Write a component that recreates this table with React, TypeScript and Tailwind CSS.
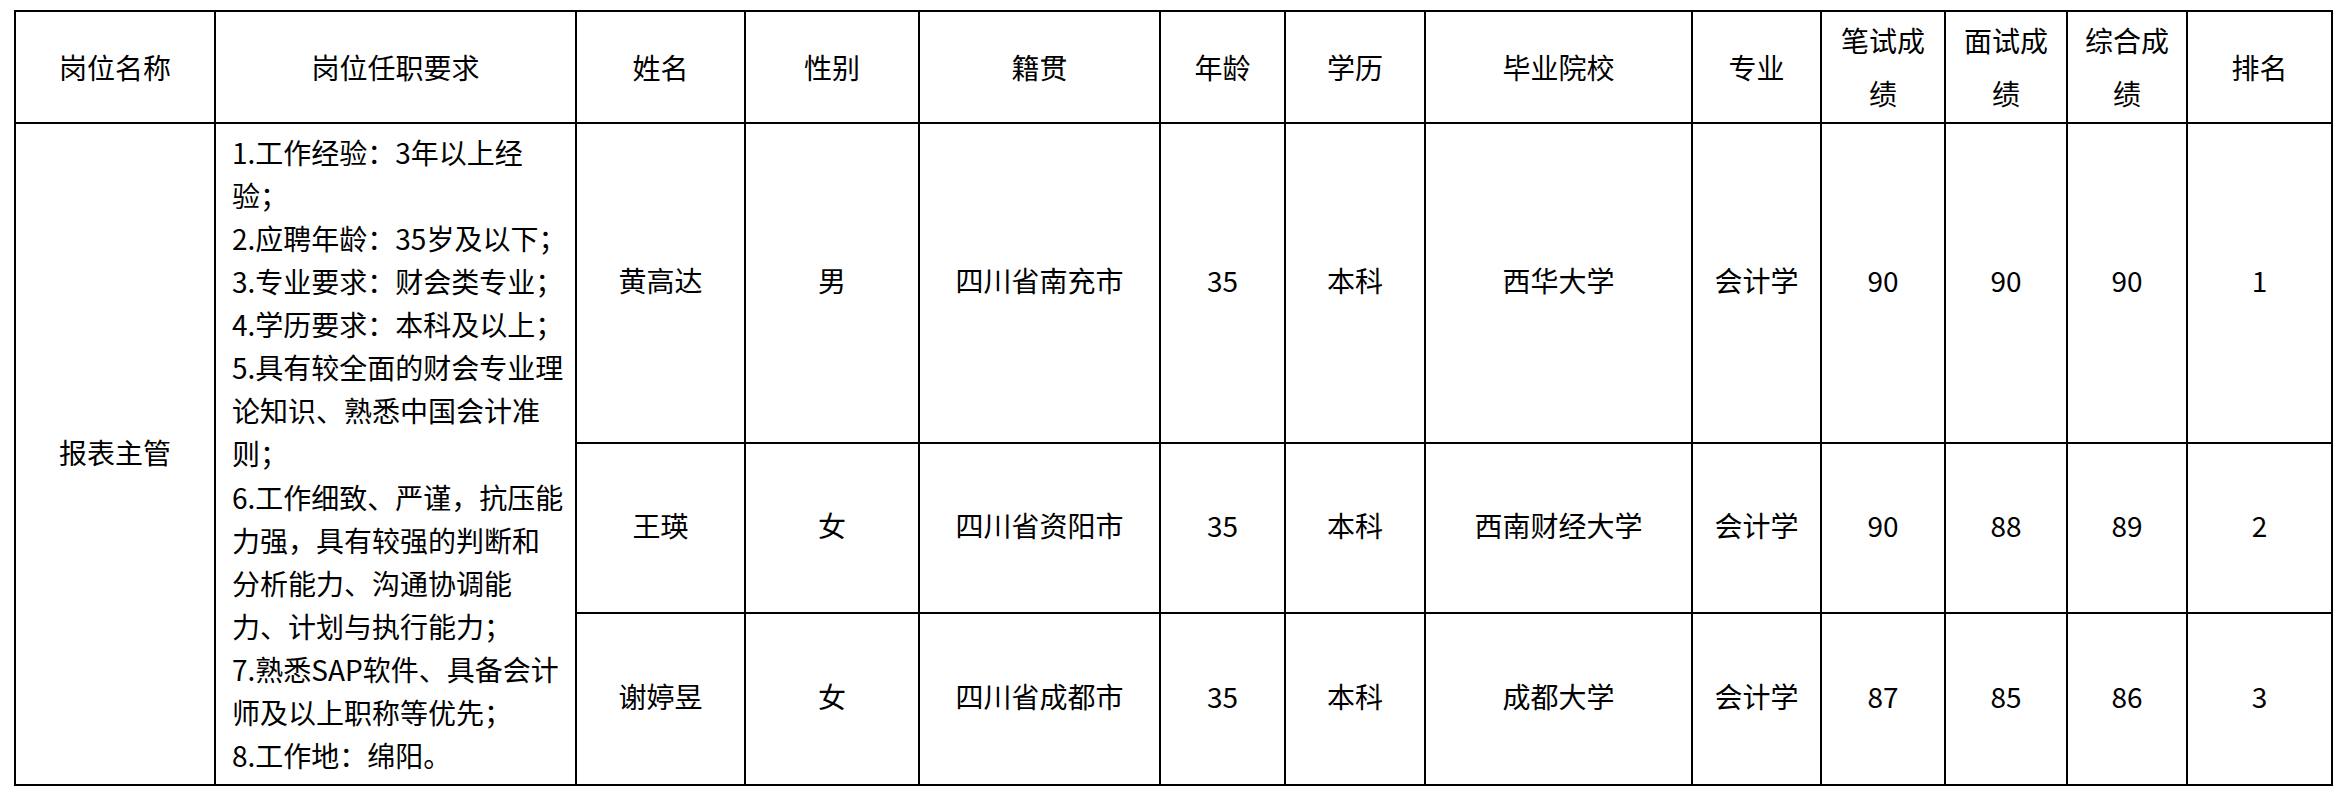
const requirements = [
  "1.工作经验：3年以上经",
  "验；",
  "2.应聘年龄：35岁及以下；",
  "3.专业要求：财会类专业；",
  "4.学历要求：本科及以上；",
  "5.具有较全面的财会专业理",
  "论知识、熟悉中国会计准",
  "则；",
  "6.工作细致、严谨，抗压能",
  "力强，具有较强的判断和",
  "分析能力、沟通协调能",
  "力、计划与执行能力；",
  "7.熟悉SAP软件、具备会计",
  "师及以上职称等优先；",
  "8.工作地：绵阳。",
];

const headers: string[][] = [
  ["岗位名称"],
  ["岗位任职要求"],
  ["姓名"],
  ["性别"],
  ["籍贯"],
  ["年龄"],
  ["学历"],
  ["毕业院校"],
  ["专业"],
  ["笔试成", "绩"],
  ["面试成", "绩"],
  ["综合成", "绩"],
  ["排名"],
];

const candidates = [
  ["黄高达", "男", "四川省南充市", "35", "本科", "西华大学", "会计学", "90", "90", "90", "1"],
  ["王瑛", "女", "四川省资阳市", "35", "本科", "西南财经大学", "会计学", "90", "88", "89", "2"],
  ["谢婷昱", "女", "四川省成都市", "35", "本科", "成都大学", "会计学", "87", "85", "86", "3"],
];

export default function App() {
  return (
    <div className="min-h-screen bg-white pt-[10px] pl-[14px] font-['Noto_Sans_CJK_SC',sans-serif] text-[28px] text-black">
      <div className="grid w-[2319px] grid-cols-[198px_359px_167px_172px_239px_123px_138px_265px_127px_122px_120px_118px_143px] grid-rows-[110px_318px_168px_170px] gap-[2px] bg-black p-[2px]">
        {/* Header */}
        {headers.map((lines, i) => (
          <div
            key={i}
            className="flex flex-col items-center justify-center bg-white leading-[53px]"
          >
            {lines.map((line) => (
              <span key={line} className="whitespace-nowrap">
                {line}
              </span>
            ))}
          </div>
        ))}

        {/* Merged cells */}
        <div className="col-start-1 row-span-3 row-start-2 flex items-center justify-center bg-white pb-[4px]">
          报表主管
        </div>
        <div className="col-start-2 row-span-3 row-start-2 flex flex-col justify-center bg-white pl-[16px] leading-[43.1px]">
          {requirements.map((line) => (
            <span key={line} className="whitespace-nowrap">
              {line}
            </span>
          ))}
        </div>

        {/* Candidate rows */}
        {candidates.map((row) =>
          row.map((cell, j) => (
            <div
              key={row[0] + j}
              className="flex items-center justify-center bg-white pb-[6px]"
            >
              {cell}
            </div>
          ))
        )}
      </div>
    </div>
  );
}
